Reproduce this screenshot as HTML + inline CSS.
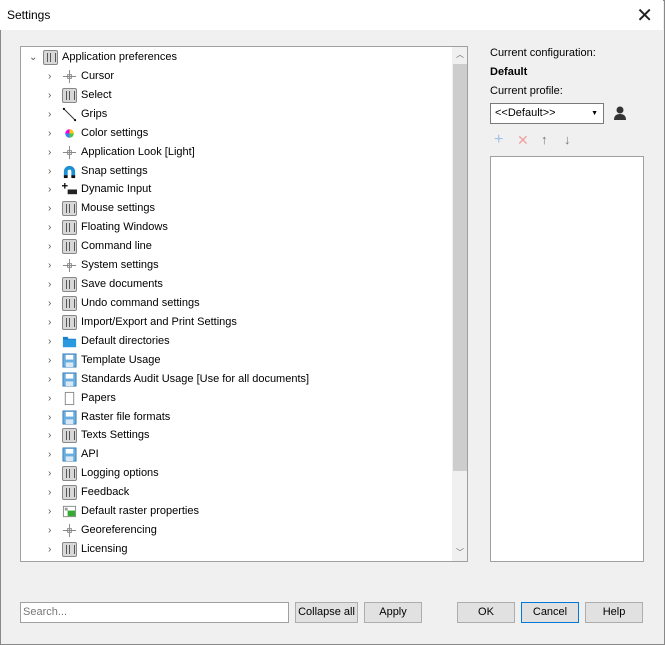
<!DOCTYPE html>
<html><head><meta charset="utf-8"><style>
*{box-sizing:border-box;margin:0;padding:0}
body{width:665px;height:645px;background:#f0f0f0;font-family:"Liberation Sans",Tahoma,sans-serif;font-size:11px;color:#000;position:relative;overflow:hidden}
.win{position:absolute;left:0;top:0;width:665px;height:645px;border:1px solid #888;}
.title{position:absolute;left:0;top:0;width:663px;height:30px;background:#fff;}
.title span{position:absolute;left:7px;top:8px;font-size:12px}
.close{position:absolute;right:10px;top:3px;font-size:20px;font-weight:100;color:#222}
.tree{position:absolute;left:20px;top:46px;width:448px;height:516px;background:#fff;border:1px solid #a0a0a0;overflow:hidden}
.sb{position:absolute;left:431px;top:0;width:16px;height:514px;background:#f0f0f0}
.thumb{position:absolute;left:1px;top:17px;width:14px;height:407px;background:#cdcdcd}
.arr{position:absolute;left:4px;font-size:8px;color:#606060}
.row{position:absolute;height:19px;line-height:19px;white-space:nowrap}
.ex{position:absolute;width:10px;color:#555;font-size:10px}
.ic{position:absolute;top:2px;left:0;width:15px;height:15px}
.set{border:1px solid #888;background:#d8d8d8;border-radius:2px}
.set:before{content:"";position:absolute;left:3px;top:2px;width:7px;height:9px;border-left:1px solid #555;border-right:1px solid #555}
.set:after{content:"";position:absolute;left:6px;top:2px;width:1px;height:9px;background:#555}
.right{position:absolute;left:490px}
.btn{position:absolute;top:602px;height:21px;border:1px solid #adadad;background:#e1e1e1;text-align:center;line-height:19px;font-size:11px}
</style></head><body>
<div class="win"></div>
<div class="title"><span>Settings</span><div class="close">✕</div></div>
<div class="tree">
<div class="sb"><div class="arr" style="top:2px">︿</div><div class="thumb"></div><div class="arr" style="top:500px">﹀</div></div>
<div id="rows"></div>
</div>
<div class="right" style="top:47px">Current configuration:</div>
<div class="right" style="top:66px;font-weight:bold">Default</div>
<div class="right" style="top:85px">Current profile:</div>
<div style="position:absolute;left:490px;top:103px;width:114px;height:21px;background:#fff;border:1px solid #7a7a7a;line-height:19px;padding-left:4px">&lt;&lt;Default&gt;&gt;<span style="position:absolute;right:5px;top:0;font-size:7px">▼</span></div>
<svg style="position:absolute;left:612px;top:105px" width="16" height="16"><circle cx="8" cy="5" r="3.5" fill="#333"/><path d="M2 15 Q2 9 8 9 Q14 9 14 15Z" fill="#333"/></svg>
<div style="position:absolute;left:494px;top:131px;color:#9cc3e6;font-size:16px">+</div>
<div style="position:absolute;left:517px;top:132px;color:#f0a0a0;font-size:14px">✕</div>
<div style="position:absolute;left:541px;top:132px;color:#777;font-size:13px;font-weight:bold">↑</div>
<div style="position:absolute;left:564px;top:132px;color:#777;font-size:13px;font-weight:bold">↓</div>
<div style="position:absolute;left:490px;top:156px;width:154px;height:406px;background:#fff;border:1px solid #a0a0a0"></div>
<div style="position:absolute;left:20px;top:602px;width:269px;height:21px;background:#fff;border:1px solid #a0a0a0;color:#777;line-height:19px;padding-left:2px">Search...</div>
<div class="btn" style="left:295px;width:63px">Collapse all</div>
<div class="btn" style="left:364px;width:58px">Apply</div>
<div class="btn" style="left:457px;width:58px">OK</div>
<div class="btn" style="left:521px;width:58px;border-color:#0078d7">Cancel</div>
<div class="btn" style="left:585px;width:58px">Help</div>
<script>
var items=[["Application preferences","set"],["Cursor","cross"],["Select","set"],["Grips","line"],["Color settings","color"],["Application Look [Light]","cross"],["Snap settings","mag"],["Dynamic Input","dyn"],["Mouse settings","set"],["Floating Windows","set"],["Command line","set"],["System settings","cross"],["Save documents","set"],["Undo command settings","set"],["Import/Export and Print Settings","set"],["Default directories","fold"],["Template Usage","disk"],["Standards Audit Usage [Use for all documents]","disk"],["Papers","paper"],["Raster file formats","disk"],["Texts Settings","set"],["API","disk"],["Logging options","set"],["Feedback","set"],["Default raster properties","raster"],["Georeferencing","cross"],["Licensing","set"]];
var svg={cross:'<svg class="ic" viewBox="0 0 16 16"><path d="M8 1V15M1 8H15" stroke="#888"/><rect x="6" y="6" width="4" height="4" fill="none" stroke="#888"/></svg>',
line:'<svg class="ic" viewBox="0 0 16 16"><path d="M2 2L14 14" stroke="#333"/><rect x="1" y="1" width="2" height="2"/><rect x="13" y="13" width="2" height="2"/></svg>',
color:'<svg class="ic" viewBox="0 0 16 16"><circle cx="8" cy="8" r="4.5" fill="#e0e"/><path d="M8 8L8 3.5A4.5 4.5 0 0 1 12.5 8Z" fill="#fc0"/><path d="M8 8L12.5 8A4.5 4.5 0 0 1 8 12.5Z" fill="#4c4"/><path d="M8 8L8 12.5A4.5 4.5 0 0 1 3.5 8Z" fill="#38f"/></svg>',
mag:'<svg class="ic" viewBox="0 0 16 16"><path d="M2 14V8A6 6 0 0 1 14 8V14H10V8A2 2 0 0 0 6 8V14Z" fill="#1e8fd0"/><rect x="2" y="12" width="4" height="3" fill="#111"/><rect x="10" y="12" width="4" height="3" fill="#111"/></svg>',
dyn:'<svg class="ic" viewBox="0 0 16 16"><path d="M3 1V7M0 4H6" stroke="#000" stroke-width="1.3"/><rect x="6" y="8" width="10" height="5" fill="#222"/></svg>',
fold:'<svg class="ic" viewBox="0 0 16 16"><path d="M1 3H6L7 5H15V14H1Z" fill="#1a7fc8"/><path d="M1 6H15V14H1Z" fill="#2a9ae0"/></svg>',
disk:'<svg class="ic" viewBox="0 0 16 16"><rect x="1" y="1" width="14" height="14" fill="#6aaee0" stroke="#3d7fb8"/><rect x="4" y="2" width="8" height="5" fill="#fff"/><rect x="4" y="10" width="8" height="5" fill="#d8e8f4"/></svg>',
paper:'<svg class="ic" viewBox="0 0 16 16"><rect x="3.5" y="1.5" width="9" height="13" fill="#fff" stroke="#888"/></svg>',
raster:'<svg class="ic" viewBox="0 0 16 16"><rect x="1.5" y="2.5" width="13" height="11" fill="#fff" stroke="#888"/><rect x="6" y="7" width="8" height="6" fill="#3a3"/><rect x="3" y="4" width="3" height="3" fill="#999"/></svg>'};
var h='';
items.forEach(function(it,i){var top=(i*18.92+1).toFixed(1);var lvl=i==0?0:1;var x=lvl?27:8;
var ic=it[1]=='set'?'<div class="ic set"></div>':svg[it[1]];
h+='<div class="row" style="top:'+top+'px;left:0;width:430px"><span class="ex" style="left:'+x+'px">'+(i==0?'⌄':'›')+'</span><span style="position:absolute;left:'+(x+14)+'px;top:0;width:15px;height:19px">'+ic+'</span><span style="position:absolute;left:'+(x+33)+'px">'+it[0]+'</span></div>';});
document.getElementById('rows').innerHTML=h;
</script>
</body></html>
